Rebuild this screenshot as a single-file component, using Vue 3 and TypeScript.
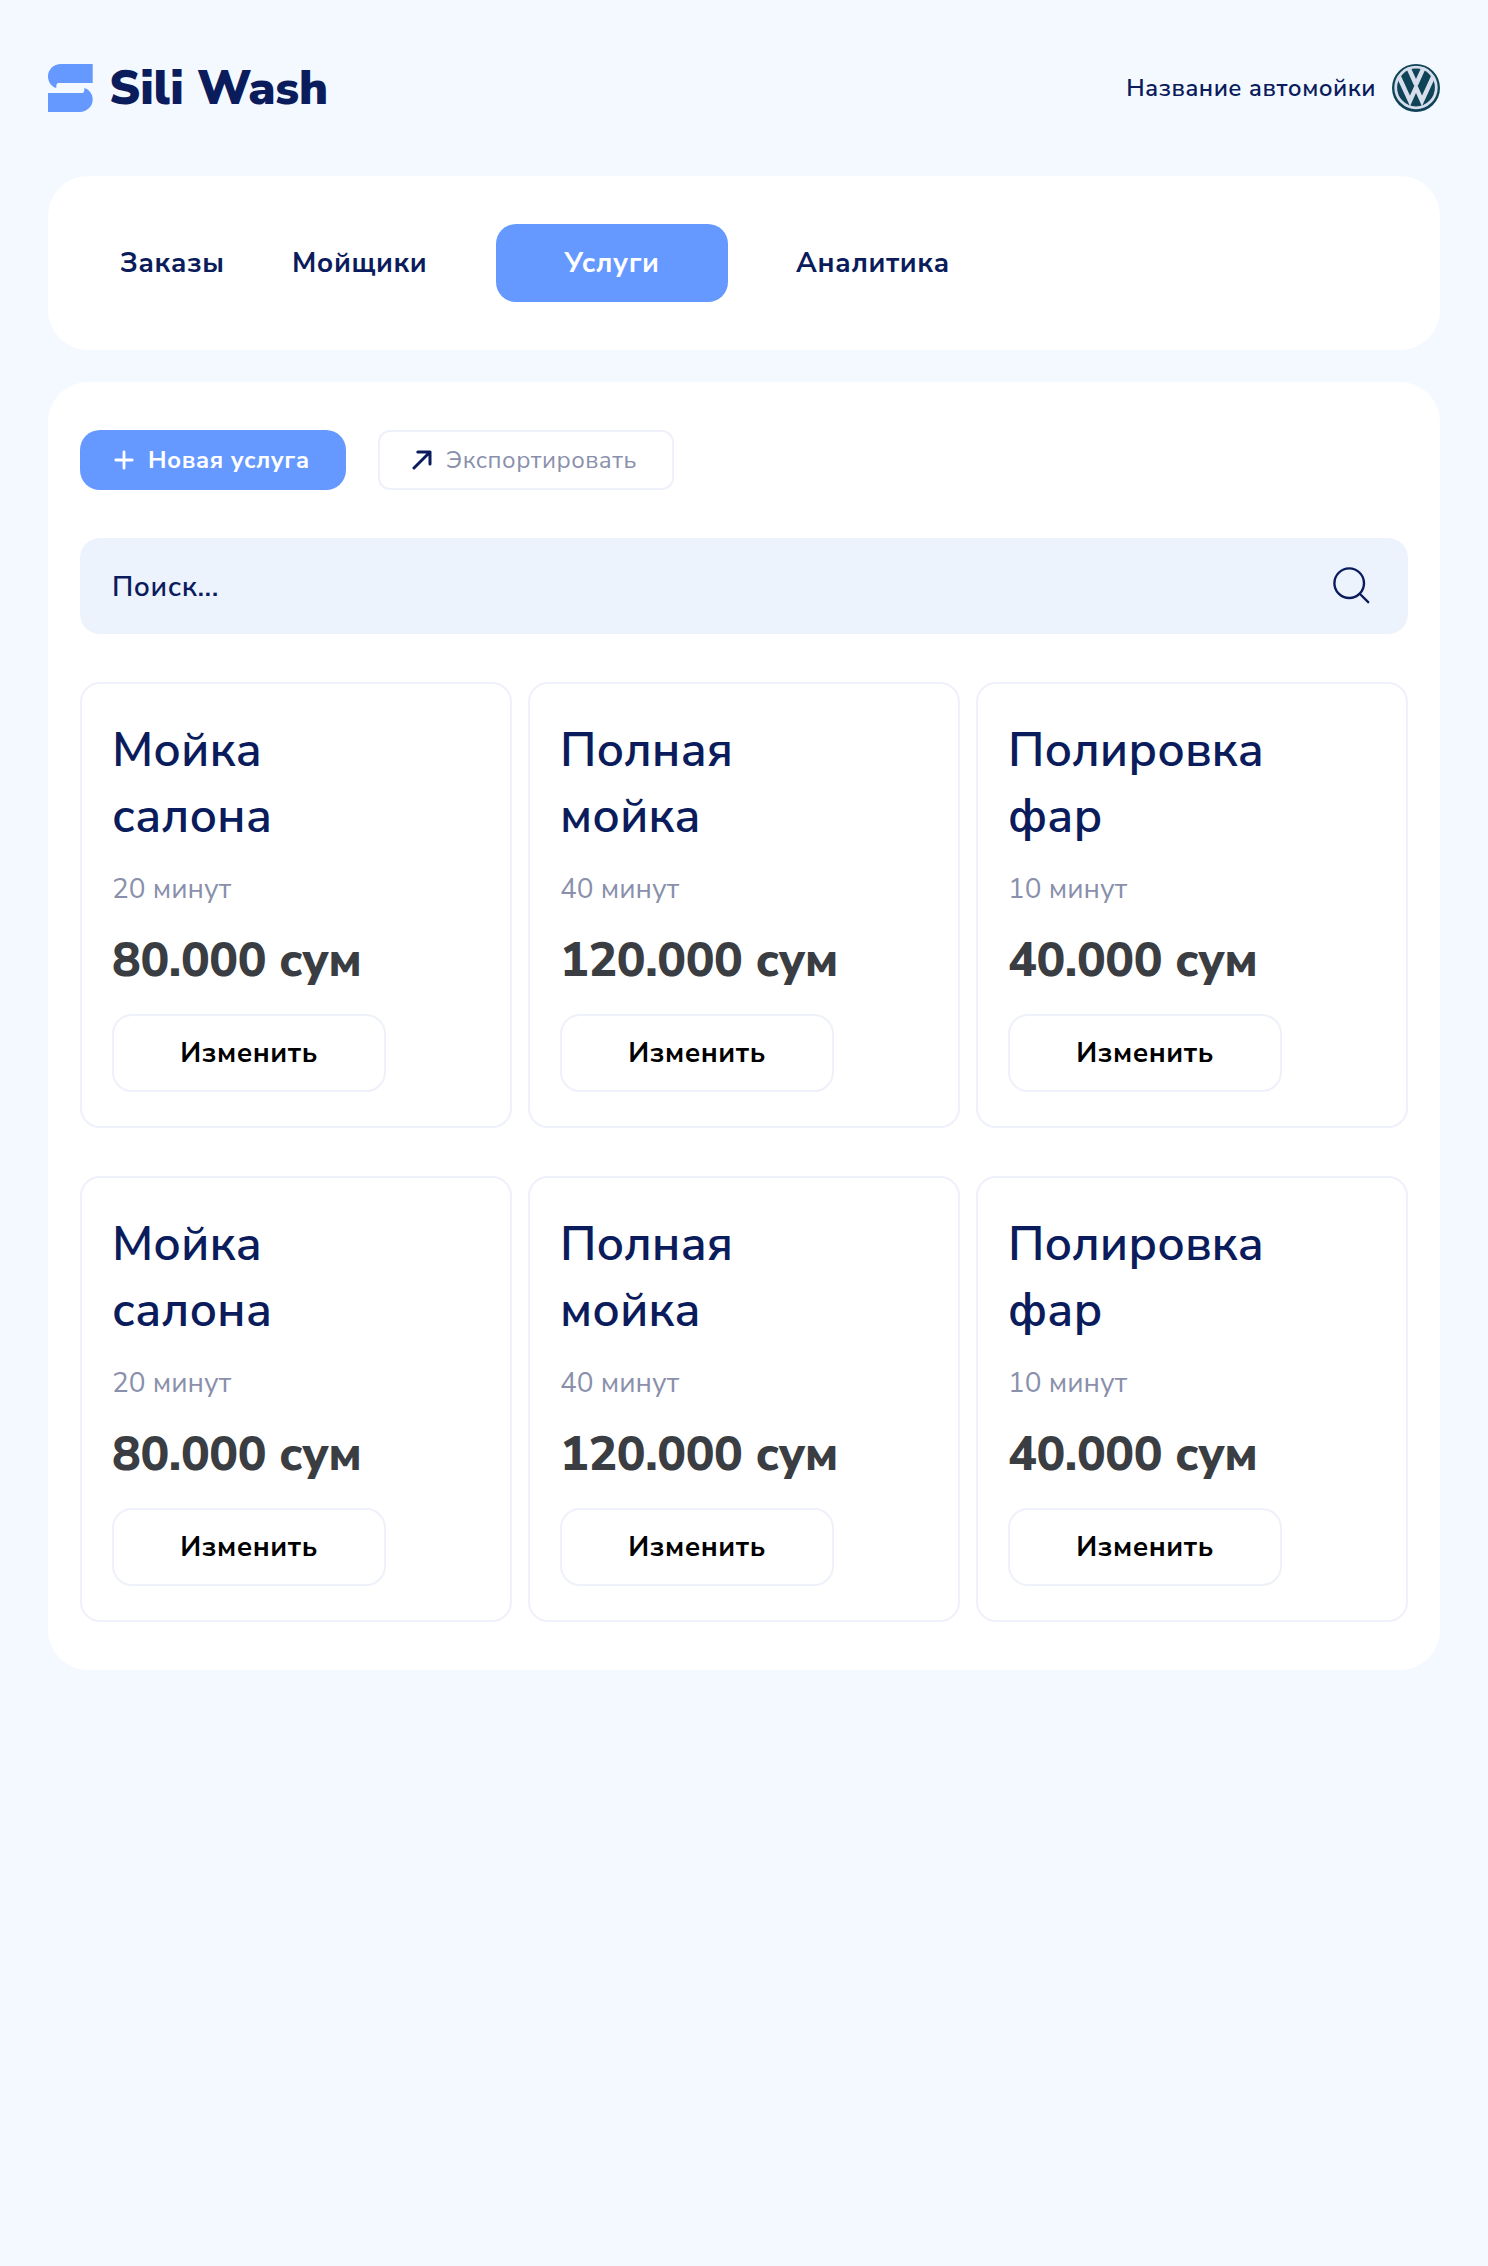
<script setup lang="ts">
interface NavItem {
  text: string
  width: number
  active?: boolean
}

interface Service {
  title: string[]
  duration: string
  price: string
}

const nav: NavItem[] = [
  { text: 'Заказы', width: 104 },
  { text: 'Мойщики', width: 136 },
  { text: 'Услуги', width: 232, active: true },
  { text: 'Аналитика', width: 154 },
]

const row: Service[] = [
  { title: ['Мойка', 'салона'], duration: '20 минут', price: '80.000 сум' },
  { title: ['Полная', 'мойка'], duration: '40 минут', price: '120.000 сум' },
  { title: ['Полировка', 'фар'], duration: '10 минут', price: '40.000 сум' },
]

const services: Service[] = [...row, ...row]
</script>

<template>
  <div class="page">
    <header class="header">
      <div class="brand">
        <svg width="45" height="48" viewBox="0 0 45 48" fill="#6699ff">
          <path d="M13 0H44.700V19H11C8.800 19 8.300 20 8.300 24C3.600 22.600 0 18 0 12.400C0 5.400 5.800 0 13 0Z" />
          <path d="M0 48V29H33.700C35.900 29 36.400 28 36.400 24C41.100 25.400 44.700 30 44.700 35.600C44.700 42.600 38.900 48 31.700 48Z" />
        </svg>
        <span class="brand-name">Sili Wash</span>
      </div>
      <div class="account">
        <span class="account-name">Название автомойки</span>
        <svg width="48" height="48" viewBox="0 0 48 48" fill="none">
          <circle cx="24" cy="24" r="24" fill="#0f4357" />
          <circle cx="24" cy="23.500" r="20.300" stroke="#d5deea" stroke-width="2.800" />
          <path d="M6.800 12.500L18 37L24 23.500L30 37L41.200 12.500" stroke="#d5deea" stroke-width="4.400" />
          <path d="M16.800 4.500L24 20.500L31.200 4.500" stroke="#d5deea" stroke-width="4.400" stroke-linejoin="bevel" />
        </svg>
      </div>
    </header>

    <nav class="nav">
      <a
        v-for="item in nav"
        :key="item.text"
        class="nav-item"
        :class="{ active: item.active }"
        :style="{ width: `${item.width}px` }"
      >{{ item.text }}</a>
    </nav>

    <main class="panel">
      <div class="actions">
        <button class="btn-new">
          <svg width="20" height="20" viewBox="0 0 20 20" fill="none" stroke="#fff" stroke-width="2.800" stroke-linecap="round">
            <path d="M10 1.800V18.200M1.800 10H18.200" />
          </svg>
          <span>Новая услуга</span>
        </button>
        <button class="btn-export">
          <svg width="20" height="20" viewBox="0 0 20 20" fill="none" stroke="#0b1c5c" stroke-width="3" stroke-linecap="round" stroke-linejoin="round">
            <path d="M2 18L18 2M5.800 2H18V14" />
          </svg>
          <span>Экспортировать</span>
        </button>
      </div>

      <div class="search">
        <span>Поиск...</span>
        <svg width="38" height="38" viewBox="0 0 38 38" fill="none" stroke="#0b1c5c" stroke-width="2.400" stroke-linecap="round">
          <circle cx="17.200" cy="16.200" r="14.800" />
          <path d="M28 27L36.200 35.200" />
        </svg>
      </div>

      <div class="grid">
        <article v-for="(service, i) in services" :key="i" class="card">
          <h2 class="title">
            <span v-for="line in service.title" :key="line">{{ line }}</span>
          </h2>
          <p class="duration">{{ service.duration }}</p>
          <p class="price">{{ service.price }}</p>
          <button class="btn-edit">Изменить</button>
        </article>
      </div>
    </main>
  </div>
</template>

<style>
body {
  background: #f4f9ff;
}
</style>

<style scoped>
.page {
  box-sizing: border-box;
  min-height: 2266px;
  padding: 64px 48px 0;
  background: #f4f9ff;
  color: #0b1c5c;
  font-family: "Nunito Sans", Nunito, Lato, "Noto Sans", sans-serif;
}

button {
  margin: 0;
  font-family: inherit;
  box-sizing: border-box;
}

.header {
  display: flex;
  align-items: center;
  justify-content: space-between;
  height: 48px;
}

.brand {
  display: flex;
  align-items: center;
  gap: 16px;
}

.brand-name {
  font-size: 48px;
  font-weight: 900;
  line-height: 66px;
  letter-spacing: -0.1px;
}

.account {
  display: flex;
  align-items: center;
  gap: 16px;
}

.account-name {
  font-size: 24px;
  font-weight: 600;
  line-height: 32px;
  letter-spacing: 0.48px;
}

.nav {
  display: flex;
  align-items: center;
  gap: 68px;
  box-sizing: border-box;
  height: 174px;
  margin-top: 64px;
  padding: 0 72px;
  border-radius: 40px;
  background: #fff;
}

.nav-item {
  height: 78px;
  font-size: 28px;
  font-weight: 700;
  line-height: 78px;
  letter-spacing: 0.56px;
  white-space: nowrap;
}

.nav-item.active {
  border-radius: 20px;
  background: #6699ff;
  color: #fff;
  text-align: center;
}

.panel {
  margin-top: 32px;
  padding: 48px 32px;
  border-radius: 40px;
  background: #fff;
}

.actions {
  display: flex;
  gap: 32px;
}

.btn-new,
.btn-export {
  display: flex;
  align-items: center;
  gap: 14px;
  height: 60px;
  font-size: 24px;
  line-height: 32px;
  letter-spacing: 0.48px;
  white-space: nowrap;
}

.btn-new {
  width: 266px;
  padding: 0 0 0 34px;
  border: 0;
  border-radius: 20px;
  background: #6699ff;
  color: #fff;
  font-weight: 700;
}

.btn-export {
  width: 296px;
  padding: 0 0 0 32px;
  border: 2px solid #eef1f9;
  border-radius: 12px;
  background: #fff;
  color: #8a90ab;
  font-weight: 400;
}

.search {
  display: flex;
  align-items: center;
  justify-content: space-between;
  box-sizing: border-box;
  height: 96px;
  margin-top: 48px;
  padding: 0 38px 0 32px;
  border-radius: 20px;
  background: #ecf3fc;
  font-size: 28px;
  font-weight: 600;
  line-height: 38px;
  letter-spacing: 0.56px;
}

.search span {
  padding-top: 2px;
}

.grid {
  display: grid;
  grid-template-columns: repeat(3, 1fr);
  gap: 48px 16px;
  margin-top: 48px;
}

.card {
  box-sizing: border-box;
  height: 446px;
  padding: 33px 30px 0;
  border: 2px solid #eef1f9;
  border-radius: 20px;
  background: #fff;
}

.title {
  display: flex;
  flex-direction: column;
  margin: 0;
  font-size: 48px;
  font-weight: 600;
  line-height: 66px;
}

.duration {
  margin: 21px 0 0;
  color: #8a90ab;
  font-size: 28px;
  line-height: 38px;
}

.price {
  margin: 19px 0 0;
  color: #3a3d42;
  font-size: 48px;
  font-weight: 800;
  line-height: 66px;
  letter-spacing: -0.4px;
}

.btn-edit {
  display: block;
  width: 274px;
  height: 78px;
  margin-top: 21px;
  padding: 0;
  border: 2px solid #eef1f9;
  border-radius: 20px;
  background: #fff;
  color: #000;
  font-size: 28px;
  font-weight: 700;
  letter-spacing: 0.56px;
}
</style>
